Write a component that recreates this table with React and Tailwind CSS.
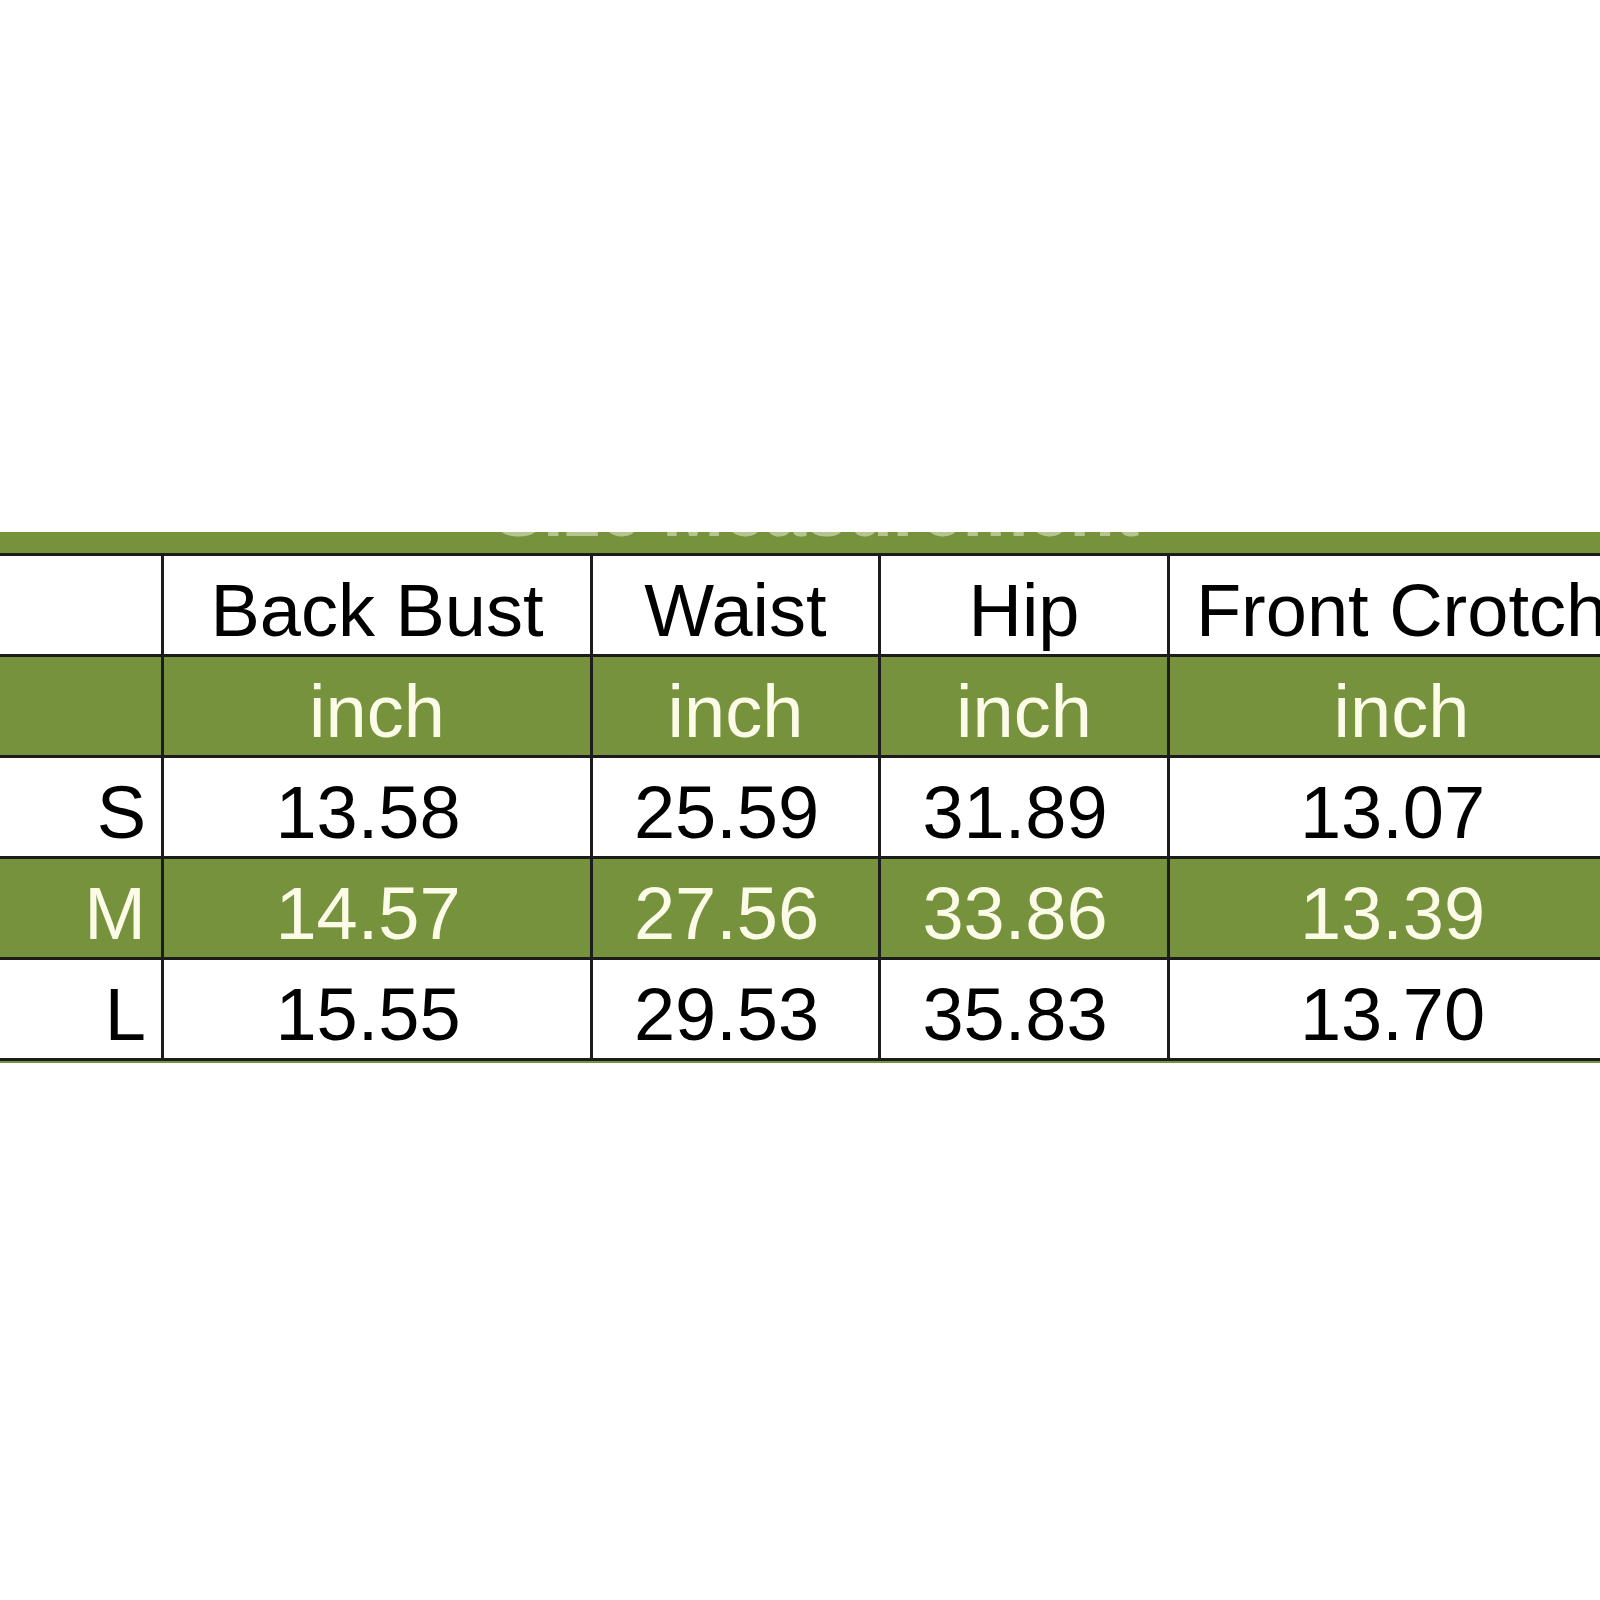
import React from "react";

const GREEN = "bg-[#76923c]";

const cols = ["w-[164px]", "w-[429px]", "w-[288px]", "w-[289px]", "w-[463px]"];

function Row({ cells, green, header }) {
  return (
    <div
      className={`flex h-[101px] border-b-[3px] border-[#1c1c1c] ${
        green ? GREEN + " text-[#fbfbe8]" : "bg-white text-black"
      }`}
    >
      {cells.map((c, i) => {
        const isLabel = i === 0;
        const isNum = !header && !isLabel;
        return (
          <div
            key={i}
            className={`${cols[i]} shrink-0 flex items-center pt-[12px] ${
              i < 4 ? "border-r-[3px] border-[#1c1c1c]" : ""
            } ${isLabel ? "justify-end pr-[15px]" : "justify-center"} ${
              isNum ? "pr-[18px]" : ""
            }`}
          >
            <span className="whitespace-nowrap leading-none">{c}</span>
          </div>
        );
      })}
    </div>
  );
}

export default function App() {
  return (
    <div
      className="w-[1600px] h-[1600px] bg-white overflow-hidden"
      style={{ fontFamily: '"Liberation Sans", Arial, sans-serif' }}
    >
      <div className="pt-[532px] w-[1633px] text-[74px]">
        <div className={`${GREEN} h-[24px] border-b-[3px] border-[#1c1c1c] overflow-hidden flex justify-center`}>
          <div className="mt-[-58px] text-[74px] font-bold leading-none text-[#dfe7c8] opacity-60 whitespace-nowrap">
            Size Measurement
          </div>
        </div>
        <Row header cells={["", "Back Bust", "Waist", "Hip", "Front Crotch"]} />
        <Row header green cells={["", "inch", "inch", "inch", "inch"]} />
        <Row cells={["S", "13.58", "25.59", "31.89", "13.07"]} />
        <Row green cells={["M", "14.57", "27.56", "33.86", "13.39"]} />
        <Row cells={["L", "15.55", "29.53", "35.83", "13.70"]} />
        <div className={`${GREEN} h-[2px]`} />
      </div>
    </div>
  );
}
